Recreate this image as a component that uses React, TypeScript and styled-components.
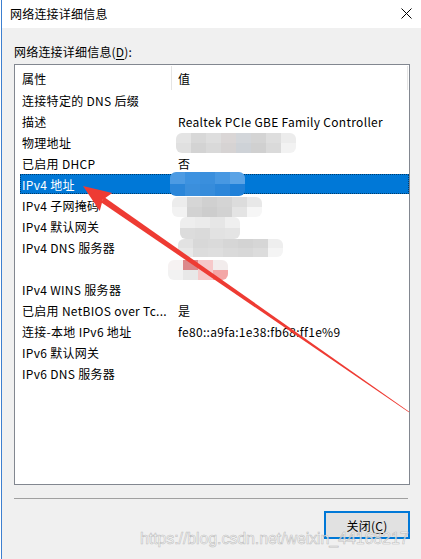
import React from 'react'
import styled, { createGlobalStyle } from 'styled-components'

const GlobalStyle = createGlobalStyle`
	html, body {
		margin: 0;
		padding: 0;
		background: #fff;
	}
	body {
		font-family: 'Noto Sans CJK SC', 'Noto Sans', sans-serif;
		font-size: 12px;
		color: #000;
	}
`

const Window = styled.div`
	position: relative;
	box-sizing: border-box;
	width: 420px;
	height: 559px;
	margin-left: 1px;
	border-left: 1px solid #3d7fcf;
	display: flex;
	flex-direction: column;
	overflow: hidden;
`

const TitleBar = styled.div`
	height: 28px;
	flex: none;
	background: #fff;
	display: flex;
	align-items: center;
	justify-content: space-between;
	padding: 0 9px 1px 8px;
	box-sizing: border-box;
`

const Title = styled.span`
	line-height: 16px;
	letter-spacing: 0.2px;
`

const Body = styled.div`
	flex: 1;
	background: #f0f0f0;
	padding: 14px 11px 0 12px;
	display: flex;
	flex-direction: column;
`

const Label = styled.div`
	line-height: 20px;
	height: 20px;
	letter-spacing: 0.2px;
	u {
		text-decoration-thickness: 1px;
		text-underline-offset: 2px;
	}
`

const ListBox = styled.div`
	margin-top: 2px;
	box-sizing: border-box;
	height: 421px;
	border: 1px solid #828790;
	background: #fff;
	display: flex;
	flex-direction: column;
	letter-spacing: 0.3px;
`

const Header = styled.div`
	height: 25px;
	display: flex;
	flex: none;
`

const HeaderCell = styled.div<{ $w: number; $pad: number; $line: string }>`
	width: ${({ $w }) => `${$w}px`};
	box-sizing: border-box;
	padding-left: ${({ $pad }) => `${$pad}px`};
	padding-top: 1px;
	display: flex;
	align-items: center;
	border-right: 1px solid ${({ $line }) => $line};
	margin: 1px 0 0;
`

const Rows = styled.div`
	padding: 0 0 0 5px;
`

const Row = styled.div<{ $selected?: boolean }>`
	position: relative;
	height: 21px;
	display: flex;
	align-items: center;
	white-space: nowrap;
	${({ $selected }) =>
		$selected &&
		`
		height: 20px;
		margin-bottom: 1px;
		background: #0078d7;
		color: #fff;
		outline: 1px dotted #003c6c;
		outline-offset: -1px;
	`}
`

const NameCell = styled.div`
	width: 158px;
	flex: none;
	padding-left: 2px;
	box-sizing: border-box;
`

const ValueCell = styled.div`
	flex: 1;
	display: flex;
	align-items: center;
	height: 100%;
`

const Mosaic = styled.div<{ $shift: number; $dy: number }>`
	display: grid;
	grid-auto-flow: row;
	margin-left: ${({ $shift }) => `${$shift}px`};
	transform: translateY(${({ $dy }) => `${$dy}px`});
	border-radius: 6px;
	overflow: hidden;
	filter: blur(0.6px);
`

const MosaicLine = styled.div`
	display: flex;
`

const Cell = styled.div<{ $c: string; $w: number; $h: number }>`
	width: ${({ $w }) => `${$w}px`};
	height: ${({ $h }) => `${$h}px`};
	background: ${({ $c }) => $c};
`

const Divider = styled.div`
	margin: 13px 2px 0 0;
	height: 1px;
	background: #a0a0a0;
`

const Footer = styled.div`
	display: flex;
	justify-content: flex-end;
	margin-top: 12px;
`

const CloseButton = styled.button`
	width: 86px;
	height: 28px;
	box-sizing: border-box;
	border: 2px solid #0078d7;
	background: #e1e1e1;
	font: inherit;
	letter-spacing: 0.2px;
	color: #000;
	padding: 0;
	u {
		text-decoration-thickness: 1px;
		text-underline-offset: 2px;
	}
`

const Watermark = styled.div`
	position: absolute;
	left: 138px;
	top: 530px;
	font-family: 'Liberation Sans', Arial, sans-serif;
	font-size: 16px;
	white-space: nowrap;
	color: rgba(255, 255, 255, 0.8);
	-webkit-text-stroke: 0.6px rgba(150, 150, 150, 0.6);
	letter-spacing: -0.1px;
	pointer-events: none;
`

const Overlay = styled.svg`
	position: absolute;
	left: -2px;
	top: 0;
	width: 421px;
	height: 559px;
	pointer-events: none;
`

type Blur = { shift: number; dy: number; w: number; h: number; lines: string[][] }

type Item = { name: string; value?: string; blur?: Blur; selected?: boolean }

const items: Item[] = [
	{ name: '连接特定的 DNS 后缀' },
	{ name: '描述', value: 'Realtek PCIe GBE Family Controller' },
	{
		name: '物理地址',
		blur: {
			shift: -2,
			dy: 0,
			w: 15,
			h: 10,
			lines: [
				['#e4e4e4', '#d8d8d8', '#dedede', '#dad6d6', '#d3d6da', '#d4d4d4', '#dedede', '#ececec'],
				['#e0e0e0', '#d3d3d3', '#d9d9d9', '#d6d3d3', '#ced2d7', '#d0d0d0', '#dadada', '#f2f2f2'],
			],
		},
	},
	{ name: '已启用 DHCP', value: '否' },
	{
		name: 'IPv4 地址',
		selected: true,
		blur: {
			shift: -8,
			dy: 0,
			w: 15,
			h: 12,
			lines: [
				['#4d9be3', '#3d92e0', '#3a8fdd', '#4798e2', '#5aa3e6'],
				['#2b86d9', '#3b8fdc', '#368cdb', '#2c86d9', '#1f80d8'],
			],
		},
	},
	{
		name: 'IPv4 子网掩码',
		blur: {
			shift: -6,
			dy: 1,
			w: 15,
			h: 10,
			lines: [
				['#ececec', '#d6d6d6', '#d0d0d0', '#d4d4d4', '#dcdcdc', '#e8e8e8'],
				['#f2f2f2', '#d2d2d2', '#cdcdcd', '#d2d2d2', '#e4e4e4', '#f6f6f6'],
			],
		},
	},
	{
		name: 'IPv4 默认网关',
		blur: {
			shift: 2,
			dy: 1,
			w: 15,
			h: 11,
			lines: [
				['#eeeeee', '#ebebeb', '#e6e6e6', '#efefef'],
				['#dcdcdc', '#dadada', '#e2e2e2', '#e4e4e4'],
			],
		},
	},
	{
		name: 'IPv4 DNS 服务器',
		blur: {
			shift: 0,
			dy: 0,
			w: 15,
			h: 9,
			lines: [
				['#e2e2e2', '#d8d8d8', '#dadada', '#d6d6d6', '#d3d3d3', '#d6d6d6', '#eeeeee'],
				['#e8e8e8', '#dcdcdc', '#dedede', '#dadada', '#d8d8d8', '#dcdcdc', '#f4f4f4'],
			],
		},
	},
	{
		name: '',
		blur: {
			shift: -10,
			dy: 1,
			w: 15,
			h: 10,
			lines: [
				['#f6f2f2', '#dc888b', '#f6c8c9', '#f2ecec'],
				['#f2f2f2', '#e8e8e8', '#f6caca', '#f3a6a6'],
			],
		},
	},
	{ name: 'IPv4 WINS 服务器' },
	{ name: '已启用 NetBIOS over Tc...', value: '是' },
	{ name: '连接-本地 IPv6 地址', value: 'fe80::a9fa:1e38:fb68:ff1e%9' },
	{ name: 'IPv6 默认网关' },
	{ name: 'IPv6 DNS 服务器' },
]

const BlurValue = ({ blur }: { blur: Blur }) => (
	<Mosaic $shift={blur.shift} $dy={blur.dy}>
		{blur.lines.map((line, i) => (
			<MosaicLine key={i}>
				{line.map((c, j) => (
					<Cell key={j} $c={c} $w={blur.w} $h={blur.h} />
				))}
			</MosaicLine>
		))}
	</Mosaic>
)

// red arrow drawn over the list
const Arrow = () => {
	const tip = [83, 186]
	const tail = [409, 412]
	const dx = tail[0] - tip[0]
	const dy = tail[1] - tip[1]
	const len = Math.hypot(dx, dy)
	const u = [dx / len, dy / len]
	const n = [-u[1], u[0]]
	const headLen = 28
	const headHalf = 11
	const base = [tip[0] + u[0] * headLen, tip[1] + u[1] * headLen]
	const neck = [tip[0] + u[0] * (headLen - 4), tip[1] + u[1] * (headLen - 4)]
	const pt = (p: number[], k: number) => `${p[0] + n[0] * k},${p[1] + n[1] * k}`
	const head = [`${tip[0]},${tip[1]}`, pt(base, headHalf), pt(neck, 0), pt(base, -headHalf)].join(' ')
	const shaft = [pt(neck, 3), pt(tail, 0.4), pt(tail, -0.4), pt(neck, -3)].join(' ')
	return (
		<Overlay viewBox='0 0 421 559'>
			<polygon points={shaft} fill='#ee3b33' />
			<polygon points={head} fill='#ee3b33' />
		</Overlay>
	)
}

const CloseIcon = () => (
	<svg width='11' height='11' viewBox='0 0 11 11'>
		<path d='M0.5 0.5 L10.5 10.5 M10.5 0.5 L0.5 10.5' stroke='#000' strokeWidth='1' fill='none' />
	</svg>
)

const App = () => (
	<>
		<GlobalStyle />
		<Window>
			<TitleBar>
				<Title>网络连接详细信息</Title>
				<CloseIcon />
			</TitleBar>
			<Body>
				<Label>
					网络连接详细信息(<u>D</u>):
				</Label>
				<ListBox>
					<Header>
						<HeaderCell $w={157} $pad={7} $line='#e5e5e5'>
							属性
						</HeaderCell>
						<HeaderCell $w={236} $pad={6} $line='#e5e5e5'>
							值
						</HeaderCell>
					</Header>
					<Rows>
						{items.map((item, i) => (
							<Row key={i} $selected={item.selected}>
								<NameCell>{item.name}</NameCell>
								<ValueCell>{item.blur ? <BlurValue blur={item.blur} /> : item.value}</ValueCell>
							</Row>
						))}
					</Rows>
				</ListBox>
				<Divider />
				<Footer>
					<CloseButton type='button'>
						关闭(<u>C</u>)
					</CloseButton>
				</Footer>
			</Body>
			<Arrow />
			<Watermark>https://blog.csdn.net/weixin_44168217</Watermark>
		</Window>
	</>
)

export default App
